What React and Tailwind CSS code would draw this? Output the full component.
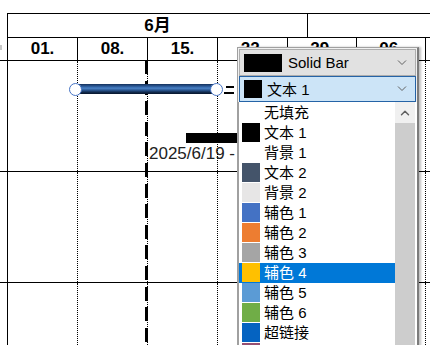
import { ChevronDown, ChevronUp } from "lucide-react";

const weeks = [
  { label: "01.", w: "w-[70px]" },
  { label: "08.", w: "w-[70px]" },
  { label: "15.", w: "w-[70px]" },
  { label: "22.", w: "w-[70px]" },
  { label: "29.", w: "w-[69px]" },
  { label: "06.", w: "w-[69px]" },
];

const colors = [
  { label: "无填充", swatch: "" },
  { label: "文本 1", swatch: "bg-black" },
  { label: "背景 1", swatch: "bg-white" },
  { label: "文本 2", swatch: "bg-[#44546a]" },
  { label: "背景 2", swatch: "bg-[#e7e6e6]" },
  { label: "辅色 1", swatch: "bg-[#4472c4]" },
  { label: "辅色 2", swatch: "bg-[#ed7d31]" },
  { label: "辅色 3", swatch: "bg-[#a5a5a5]" },
  { label: "辅色 4", swatch: "bg-[#ffc000]", selected: true },
  { label: "辅色 5", swatch: "bg-[#5b9bd5]" },
  { label: "辅色 6", swatch: "bg-[#70ad47]" },
  { label: "超链接", swatch: "bg-[#0563c1]" },
  { label: "已访问的超链接", swatch: "bg-[#954f72]" },
];

function Chevron() {
  return (
    <svg width="10" height="6" viewBox="0 0 10 6" className="shrink-0">
      <polyline points="1,0.5 5,4.5 9,0.5" fill="none" stroke="#606060" strokeWidth="1" />
    </svg>
  );
}

function ColorDropdown() {
  return (
    <div className="absolute left-[237px] top-[47px] w-[182px] h-[300px] bg-[#f0f0f0] border-l border-t border-[#a0a0a0] border-r-2 border-r-[#7c7c7c] shadow-[2px_0_2px_rgba(0,0,0,0.25)] flex flex-col">
      {/* line style combo */}
      <div className="mx-[1px] mt-[1px] h-[27px] flex items-center gap-[6px] pl-[4px] pr-[8px] bg-[#e1e1e1] border border-[#adadad]">
        <div className="w-[38px] h-[18px] bg-black" />
        <span className="flex-1 text-[15px] leading-none">Solid Bar</span>
        <Chevron />
      </div>
      {/* colour combo */}
      <div className="mx-[1px] h-[26px] flex items-center gap-[5px] pl-[4px] pr-[8px] bg-[#cce4f7] border border-[#2563a6]">
        <div className="w-[18px] h-[18px] bg-black" />
        <span className="flex-1 text-[15px] leading-none">文本 1</span>
        <Chevron />
      </div>
      {/* colour list */}
      <div className="flex flex-1 bg-white border-l border-[#a0a0a0] ml-0 overflow-hidden">
        <div className="w-[156px] pt-[1px]">
          {colors.map((c) => (
            <div
              key={c.label}
              className={
                "h-[20px] flex items-start gap-[4px] pl-[3px] " +
                (c.selected ? "bg-[#0078d7] text-white" : "text-black")
              }
            >
              <div className={"w-[18px] h-[19px] shrink-0 " + c.swatch} />
              <span className="text-[15px] leading-[19px]">{c.label}</span>
            </div>
          ))}
        </div>
        <div className="w-[20px] flex flex-col bg-[#cdcdcd]">
          <div className="h-[21px] bg-[#f0f0f0] flex items-center justify-center">
            <ChevronUp size={14} strokeWidth={2.5} color="#606060" />
          </div>
        </div>
      </div>
    </div>
  );
}

export default function App() {
  return (
    <div className="relative w-[430px] h-[345px] overflow-hidden bg-white text-black font-['Liberation_Sans','Noto_Sans_CJK_SC',sans-serif]">
      <div className="pt-[13px]">
        {/* timescale header */}
        <div className="ml-[7px] border-t border-l border-black">
          <div className="flex h-[24px] border-b border-black">
            <div className="w-[300px] border-r border-black flex items-center justify-center text-[17px] font-bold">
              6月
            </div>
            <div className="flex-1" />
          </div>
          <div className="flex h-[22px]">
            {weeks.map((w) => (
              <div
                key={w.label}
                className={w.w + " border-r border-black flex items-center justify-center text-[17px] font-bold"}
              >
                {w.label}
              </div>
            ))}
          </div>
        </div>

        {/* task rows */}
        {[0, 1, 2].map((r) => (
          <div key={r} className="flex h-[111px] border-t border-black">
            <div className="w-[8px] border-r border-black" />
            {weeks.map((w) => (
              <div key={w.label} className={w.w + " border-r border-dotted border-black"} />
            ))}
          </div>
        ))}
      </div>

      {/* today line */}
      <div className="absolute left-[145px] top-[60px] w-[3px] h-[290px] bg-[repeating-linear-gradient(to_bottom,#000_0px,#000_14px,transparent_14px,transparent_20.6px)]" />

      {/* summary bar */}
      <div className="absolute left-[75px] top-[84px] w-[141px] h-[10px] bg-[linear-gradient(to_bottom,#14305a_0%,#2e5d9c_25%,#4a82c6_42%,#2a5691_62%,#112a4d_82%,#07142a_100%)]" />
      <div className="absolute left-[69px] top-[83px] w-[13px] h-[13px] rounded-full bg-white border-[1.5px] border-[#4472c4]" />
      <div className="absolute left-[210px] top-[83px] w-[13px] h-[13px] rounded-full bg-white border-[1.5px] border-[#4472c4]" />
      <div className="absolute left-[226px] top-[86px] w-[8px] h-[2px] bg-black" />
      <div className="absolute left-[224px] top-[92px] w-[10px] h-[2px] bg-black" />

      {/* milestone bar + date */}
      <div className="absolute left-[186px] top-[133px] w-[60px] h-[10px] bg-black" />
      <div className="absolute left-[149px] top-[144px] text-[17px] leading-[20px] text-[#222]">2025/6/19 -</div>

      <div className="absolute left-0 top-[45px] w-[2px] h-[5px] bg-[#c8c8c8]" />

      <ColorDropdown />
    </div>
  );
}
